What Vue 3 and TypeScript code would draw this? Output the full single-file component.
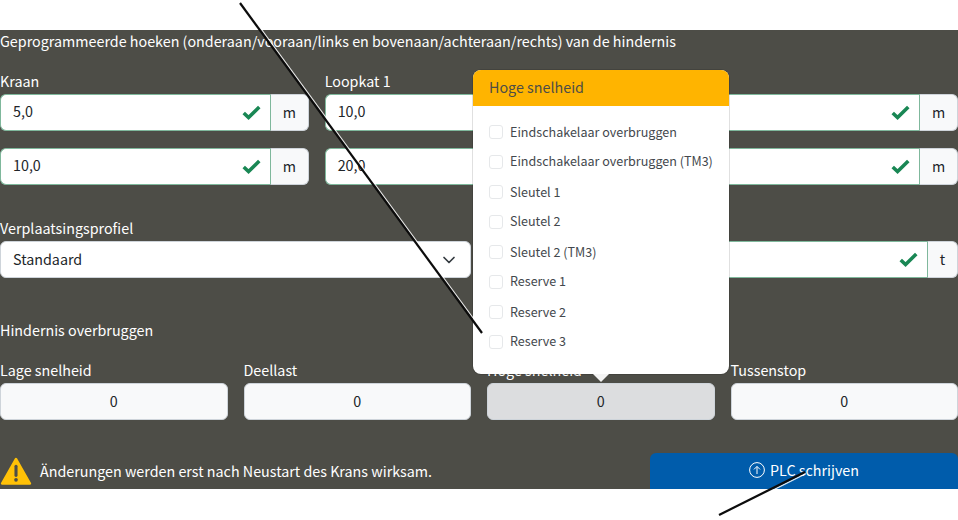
<script setup lang="ts">
const options: string[] = [
  'Eindschakelaar overbruggen',
  'Eindschakelaar overbruggen (TM3)',
  'Sleutel 1',
  'Sleutel 2',
  'Sleutel 2 (TM3)',
  'Reserve 1',
  'Reserve 2',
  'Reserve 3',
]
const rows: { label: string; values: string[] }[] = [
  { label: 'Kraan', values: ['5,0', '10,0'] },
  { label: 'Loopkat 1', values: ['10,0', '20,0'] },
  { label: 'Loopkat 2', values: ['10,0', '20,0'] },
]
const bridges: { label: string; active?: boolean }[] = [
  { label: 'Lage snelheid' },
  { label: 'Deellast' },
  { label: 'Hoge snelheid', active: true },
  { label: 'Tussenstop' },
]
</script>

<template>
  <div class="page">
    <section class="panel">
      <h2 class="title">Geprogrammeerde hoeken (onderaan/vooraan/links en bovenaan/achteraan/rechts) van de hindernis</h2>

      <div class="three">
        <div v-for="col in rows" :key="col.label" class="col">
          <label class="label">{{ col.label }}</label>
          <div v-for="v in col.values" :key="v" class="group">
            <div class="input">
              <span class="val up">{{ v }}</span>
              <svg class="check" viewBox="0 0 20 16" width="21" height="17">
                <path d="M2.6 8.4 L7.2 12.8 L17.4 2.8" fill="none" stroke="#198754" stroke-width="3.4" />
              </svg>
            </div>
            <div class="unit"><span class="val">m</span></div>
          </div>
        </div>
      </div>

      <div class="two">
        <div>
          <label class="label">Verplaatsingsprofiel</label>
          <div class="select">
            <span class="val">Standaard</span>
            <svg viewBox="0 0 16 16" width="16" height="16">
              <path d="M3 5.5 L8 10.5 L13 5.5" fill="none" stroke="#343a40" stroke-width="1.7" stroke-linecap="round" stroke-linejoin="round" />
            </svg>
          </div>
        </div>
        <div>
          <label class="label">Last</label>
          <div class="group">
            <div class="input">
              <span class="val">10,0</span>
              <svg class="check" viewBox="0 0 20 16" width="21" height="17">
                <path d="M2.6 8.4 L7.2 12.8 L17.4 2.8" fill="none" stroke="#198754" stroke-width="3.4" />
              </svg>
            </div>
            <div class="unit narrow"><span class="val">t</span></div>
          </div>
        </div>
      </div>

      <h3 class="subtitle">Hindernis overbruggen</h3>

      <div class="four">
        <div v-for="b in bridges" :key="b.label">
          <label class="label">{{ b.label }}</label>
          <div class="count" :class="{ active: b.active }"><span class="val">0</span></div>
        </div>
      </div>

      <div class="footer">
        <div class="warning">
          <svg viewBox="0 0 32 30" width="32" height="29">
            <path d="M16 2 L30.5 27.5 H1.5 Z" fill="#ffc107" stroke="#ffc107" stroke-width="2.4" stroke-linejoin="round" />
            <path d="M16 9.5 V19" stroke="#4d4d47" stroke-width="3.2" stroke-linecap="round" />
            <circle cx="16" cy="23.6" r="1.9" fill="#4d4d47" />
          </svg>
          <span class="warn-text">Änderungen werden erst nach Neustart des Krans wirksam.</span>
        </div>
        <button class="write" type="button">
          <svg viewBox="0 0 16 16" width="16" height="16">
            <circle cx="8" cy="8" r="7.4" fill="none" stroke="#fff" stroke-width="1" />
            <path d="M8 12 V4.6 M5 7.4 L8 4.4 L11 7.4" fill="none" stroke="#fff" stroke-width="1" />
          </svg>
          <span>PLC schrijven</span>
        </button>
      </div>

      <div class="popover">
        <div class="pop-head">Hoge snelheid</div>
        <ul class="pop-body">
          <li v-for="o in options" :key="o">
            <span class="box"></span><span class="opt">{{ o }}</span>
          </li>
        </ul>
        <span class="arrow"></span>
      </div>
    </section>

    <svg class="annot" viewBox="0 0 958 520" width="958" height="520">
      <g fill="none">
        <path d="M240 3 L482 333" stroke="#fff" stroke-width="1.3" transform="translate(2.1 0.2)" opacity="0.85" />
        <path d="M240 3 L482 333" stroke="#0c0c0c" stroke-width="2.2" />
        <path d="M719 515 L805 472" stroke="#fff" stroke-width="1.3" transform="translate(0.8 1.6)" opacity="0.85" />
        <path d="M719 515 L805 472" stroke="#0c0c0c" stroke-width="2.2" />
      </g>
    </svg>
  </div>
</template>

<style>
html, body { margin: 0; background: #fff; }
</style>

<style scoped>
.page {
  position: relative;
  width: 958px;
  height: 520px;
  overflow: hidden;
  background: #fff;
  padding-top: 30px;
  box-sizing: border-box;
  font-family: "Noto Sans CJK SC", "Noto Sans", sans-serif;
  font-size: 14.32px;
}
.panel {
  position: relative;
  height: 459px;
  background: #4d4d47;
  color: #fff;
  box-sizing: border-box;
  padding-top: 1px;
}
.title, .subtitle {
  margin: 0;
  font-size: 14.32px;
  font-weight: 400;
  line-height: 22px;
}
.title {
  line-height: 20px;
  height: 22px;
  margin-bottom: 18px;
}
.label {
  display: block;
  line-height: 20px;
  height: 23px;
}
.val { position: relative; top: -1px; }
.val.up { top: -2px; }
.three {
  display: grid;
  grid-template-columns: repeat(3, 1fr);
  column-gap: 16px;
}
.group {
  display: flex;
  height: 37px;
  margin-bottom: 17px;
}
.input {
  flex: 1;
  display: flex;
  align-items: center;
  justify-content: space-between;
  background: #fff;
  color: #212529;
  border: 1px solid #7fb89c;
  border-right-width: 0;
  border-radius: 6px 0 0 6px;
  padding: 0 8px 0 12px;
  box-sizing: border-box;
}
.unit {
  width: 38.5px;
  display: flex;
  align-items: center;
  justify-content: center;
  background: #f8f9fa;
  color: #212529;
  border: 1px solid #ced4da;
  border-left: 1px solid #7fb89c;
  border-radius: 0 6px 6px 0;
  box-sizing: border-box;
}
.unit.narrow { width: 31px; }
.two {
  display: grid;
  grid-template-columns: 1fr 1fr;
  column-gap: 16px;
  margin-top: 16px;
}
.select {
  height: 37px;
  display: flex;
  align-items: center;
  justify-content: space-between;
  background: #fff;
  color: #212529;
  border: 1px solid #ced4da;
  border-radius: 6px;
  padding: 0 13px 0 12px;
  box-sizing: border-box;
}
.two .group { margin-bottom: 0; }
.subtitle { margin-top: 41px; }
.four {
  display: grid;
  grid-template-columns: repeat(4, 1fr);
  column-gap: 16px;
  margin-top: 19px;
}
.count {
  height: 37px;
  display: flex;
  align-items: center;
  justify-content: center;
  background: #f8f9fa;
  color: #212529;
  border: 1px solid #ced4da;
  border-radius: 6px;
  box-sizing: border-box;
}
.count.active { background: #dcdddf; }
.footer {
  display: flex;
  justify-content: space-between;
  align-items: flex-end;
  margin-top: 33px;
}
.warning {
  display: flex;
  align-items: center;
  gap: 8px;
  padding-bottom: 3px;
}
.warn-text { position: relative; top: -1px; }
.write {
  width: 308px;
  height: 36px;
  display: flex;
  align-items: center;
  justify-content: center;
  gap: 5px;
  padding: 0;
  border: 0;
  border-radius: 6px 6px 0 0;
  background: #005cab;
  color: #fff;
  font: inherit;
}
.write span { position: relative; top: -2px; }
.write svg { position: relative; top: -1px; }
.popover {
  position: absolute;
  left: 473px;
  top: 40px;
  width: 256px;
  height: 304px;
  background: #fff;
  border-radius: 8px;
  box-shadow: 0 0 0 1px rgba(0, 0, 0, 0.12);
  color: #43484d;
}
.pop-head {
  height: 36px;
  line-height: 34px;
  padding: 0 16px;
  background: #ffb400;
  color: #4d4d47;
  border-radius: 8px 8px 0 0;
  font-size: 14.32px;
}
.pop-body {
  list-style: none;
  margin: 0;
  padding: 11px 16px 0;
  font-size: 12.55px;
}
.pop-body li {
  display: flex;
  align-items: center;
  height: 30px;
  gap: 7px;
  white-space: nowrap;
}
.opt { position: relative; top: -1px; }
.pop-body li:nth-child(even) .opt { top: -2px; }
.box {
  width: 14px;
  height: 14px;
  box-sizing: border-box;
  border: 1px solid #e6e8ea;
  border-radius: 3px;
  background: #fff;
  flex: none;
}
.arrow {
  position: absolute;
  left: 120px;
  bottom: -8px;
  width: 0;
  height: 0;
  border-left: 8px solid transparent;
  border-right: 8px solid transparent;
  border-top: 8px solid #f4f4f4;
}
.annot {
  position: absolute;
  left: 0;
  top: 0;
  pointer-events: none;
}
</style>
